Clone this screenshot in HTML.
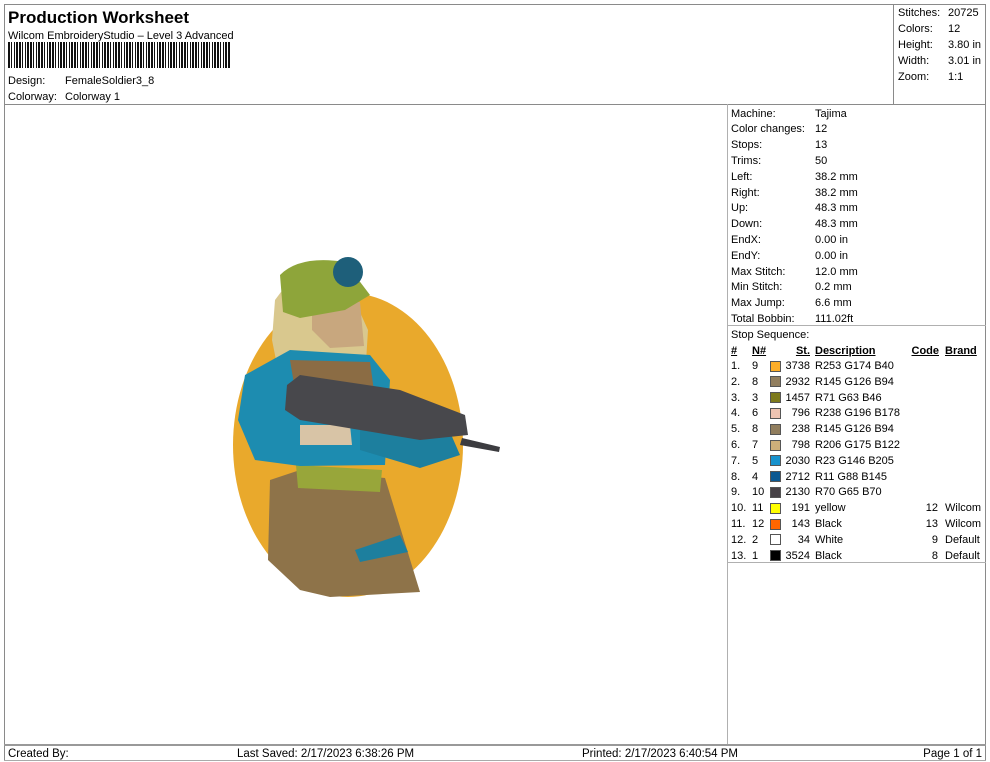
<!DOCTYPE html>
<html><head><meta charset="utf-8"><style>
body{margin:0;width:990px;height:762px;background:#fff;position:relative;overflow:hidden;font-family:"Liberation Sans",Arial,sans-serif;font-size:11px;color:#000}
.a{position:absolute;white-space:nowrap;line-height:13px;margin-top:1.5px}
.l{position:absolute;background:#8a8a8a}
.sw{position:absolute;width:9px;height:9px;border:1px solid #555}
.n{font-family:"Liberation Sans Narrow","Liberation Sans",sans-serif;font-stretch:condensed}
</style></head><body>
<div class="l" style="left:4px;top:4px;width:982px;height:1px"></div>
<div class="l" style="left:4px;top:4px;width:1px;height:757px"></div>
<div class="l" style="left:985px;top:4px;width:1px;height:757px"></div>
<div class="l" style="left:4px;top:104px;width:982px;height:1px"></div>
<div class="l" style="left:893px;top:4px;width:1px;height:100px"></div>
<div class="l" style="left:727px;top:104px;width:1px;height:640px;background:#b0b0b0"></div>
<div class="l" style="left:727px;top:325px;width:259px;height:1px;background:#b0b0b0"></div>
<div class="l" style="left:727px;top:562px;width:259px;height:1px;background:#b0b0b0"></div>
<div class="l" style="left:4px;top:744px;width:982px;height:2px;background:#999"></div>
<div class="l" style="left:4px;top:760px;width:982px;height:1px;background:#aaa"></div>

<div class="a" style="left:8px;top:6px;font-size:17px;font-weight:bold;line-height:20px">Production Worksheet</div>
<div class="a" style="left:8px;top:28px">Wilcom EmbroideryStudio – Level 3 Advanced</div>
<div style="position:absolute;left:8px;top:42px;width:222px;height:26px;background:repeating-linear-gradient(90deg,#111 0 2px,#fff 2px 3px,#111 3px 4px,#fff 4px 6px,#111 6px 7px,#fff 7px 8px,#111 8px 10px,#fff 10px 11px)"></div>
<div class="a" style="left:8px;top:73px">Design:</div><div class="a" style="left:65px;top:73px">FemaleSoldier3_8</div>
<div class="a" style="left:8px;top:89px">Colorway:</div><div class="a" style="left:65px;top:89px">Colorway 1</div>

<div class="a" style="left:898px;top:5px">Stitches:</div><div class="a" style="left:948px;top:5px">20725</div>
<div class="a" style="left:898px;top:21px">Colors:</div><div class="a" style="left:948px;top:21px">12</div>
<div class="a" style="left:898px;top:37px">Height:</div><div class="a" style="left:948px;top:37px">3.80 in</div>
<div class="a" style="left:898px;top:53px">Width:</div><div class="a" style="left:948px;top:53px">3.01 in</div>
<div class="a" style="left:898px;top:69px">Zoom:</div><div class="a" style="left:948px;top:69px">1:1</div>

<div class="a" style="left:731px;top:106px">Machine:</div><div class="a" style="left:815px;top:106px">Tajima</div>
<div class="a" style="left:731px;top:121.8px">Color changes:</div><div class="a" style="left:815px;top:121.8px">12</div>
<div class="a" style="left:731px;top:137.6px">Stops:</div><div class="a" style="left:815px;top:137.6px">13</div>
<div class="a" style="left:731px;top:153.4px">Trims:</div><div class="a" style="left:815px;top:153.4px">50</div>
<div class="a" style="left:731px;top:169.2px">Left:</div><div class="a" style="left:815px;top:169.2px">38.2 mm</div>
<div class="a" style="left:731px;top:185px">Right:</div><div class="a" style="left:815px;top:185px">38.2 mm</div>
<div class="a" style="left:731px;top:200.8px">Up:</div><div class="a" style="left:815px;top:200.8px">48.3 mm</div>
<div class="a" style="left:731px;top:216.6px">Down:</div><div class="a" style="left:815px;top:216.6px">48.3 mm</div>
<div class="a" style="left:731px;top:232.4px">EndX:</div><div class="a" style="left:815px;top:232.4px">0.00 in</div>
<div class="a" style="left:731px;top:248.2px">EndY:</div><div class="a" style="left:815px;top:248.2px">0.00 in</div>
<div class="a" style="left:731px;top:264px">Max Stitch:</div><div class="a" style="left:815px;top:264px">12.0 mm</div>
<div class="a" style="left:731px;top:279.8px">Min Stitch:</div><div class="a" style="left:815px;top:279.8px">0.2 mm</div>
<div class="a" style="left:731px;top:295.6px">Max Jump:</div><div class="a" style="left:815px;top:295.6px">6.6 mm</div>
<div class="a" style="left:731px;top:311.4px">Total Bobbin:</div><div class="a" style="left:815px;top:311.4px">111.02ft</div>
<div class="a" style="left:731px;top:327px">Stop Sequence:</div>

<div class="a" style="left:731px;top:343px;font-weight:bold;text-decoration:underline">#</div>
<div class="a" style="left:752px;top:343px;font-weight:bold;text-decoration:underline">N#</div>
<div class="a" style="left:770px;top:343px;width:40px;text-align:right;font-weight:bold;text-decoration:underline">St.</div>
<div class="a" style="left:815px;top:343px;font-weight:bold;text-decoration:underline">Description</div>
<div class="a" style="left:895px;top:343px;width:44px;text-align:right;font-weight:bold;text-decoration:underline">Code</div>
<div class="a" style="left:945px;top:343px;font-weight:bold;text-decoration:underline">Brand</div>

<div id="rows"></div>
<script>
var r=[["1.","9","#fdae28","3738","R253 G174 B40","",""],["2.","8","#917e5e","2932","R145 G126 B94","",""],["3.","3","#7d7a1c","1457","R71 G63 B46","",""],["4.","6","#eec4b2","796","R238 G196 B178","",""],["5.","8","#917e5e","238","R145 G126 B94","",""],["6.","7","#ceaf7a","798","R206 G175 B122","",""],["7.","5","#1792cd","2030","R23 G146 B205","",""],["8.","4","#0b5891","2712","R11 G88 B145","",""],["9.","10","#464146","2130","R70 G65 B70","",""],["10.","11","#ffff00","191","yellow","12","Wilcom"],["11.","12","#ff6600","143","Black","13","Wilcom"],["12.","2","#ffffff","34","White","9","Default"],["13.","1","#000000","3524","Black","8","Default"]];
var h="";r.forEach(function(x,i){var t=358.5+i*15.8;
h+='<div class="a" style="left:731px;top:'+t+'px">'+x[0]+'</div><div class="a" style="left:752px;top:'+t+'px">'+x[1]+'</div><div class="sw" style="left:770px;top:'+(t+2)+'px;background:'+x[2]+'"></div><div class="a" style="left:770px;width:40px;text-align:right;top:'+t+'px">'+x[3]+'</div><div class="a" style="left:815px;top:'+t+'px">'+x[4]+'</div><div class="a" style="left:895px;width:43px;text-align:right;top:'+t+'px">'+x[5]+'</div><div class="a" style="left:945px;top:'+t+'px">'+x[6]+'</div>';});
document.getElementById("rows").innerHTML=h;
</script>

<svg style="position:absolute;left:0;top:0" width="990" height="762">
<ellipse cx="348" cy="445" rx="115" ry="152" fill="#e9a92c"/>
<path d="M270 480 L300 470 L385 478 L420 592 L330 597 L300 590 L268 560 Z" fill="#8e7349"/>
<path d="M296 465 L382 470 L380 492 L298 488 Z" fill="#98a63a"/>
<path d="M275 300 L290 280 L350 290 L368 330 L365 378 L280 380 L272 340 Z" fill="#d9c88e"/>
<path d="M312 300 L360 302 L364 346 L330 348 L312 330 Z" fill="#c8a77e"/>
<path d="M280 275 Q300 255 345 262 L370 295 L345 310 L300 318 L283 312 Z" fill="#8ea53a"/>
<circle cx="348" cy="272" r="15" fill="#1e5f7a"/>
<path d="M245 375 L290 350 L370 355 L390 380 L385 465 L300 466 L255 460 L238 420 Z" fill="#1d8cb0"/>
<path d="M290 360 L370 362 L378 420 L300 420 Z" fill="#8b6c44"/>
<path d="M360 420 L450 432 L460 455 L420 468 L360 450 Z" fill="#1d7f9e"/>
<path d="M300 425 L350 425 L352 445 L300 445 Z" fill="#d8c4a6"/>
<path d="M287 385 L300 375 L400 390 L465 415 L468 435 L420 440 L300 420 L285 410 Z" fill="#48484c"/>
<path d="M462 438 L500 447 L499 452 L460 445 Z" fill="#3c3c40"/>
<path d="M355 550 L400 535 L408 552 L360 562 Z" fill="#1d7f9e"/>
</svg>

<div class="a n" style="left:8px;top:746px;font-size:11.5px">Created By:</div>
<div class="a n" style="left:237px;top:746px;font-size:11.5px">Last Saved: 2/17/2023 6:38:26 PM</div>
<div class="a n" style="left:582px;top:746px;font-size:11.5px">Printed: 2/17/2023 6:40:54 PM</div>
<div class="a n" style="left:900px;width:82px;text-align:right;top:746px;font-size:11.5px">Page 1 of 1</div>
</body></html>
